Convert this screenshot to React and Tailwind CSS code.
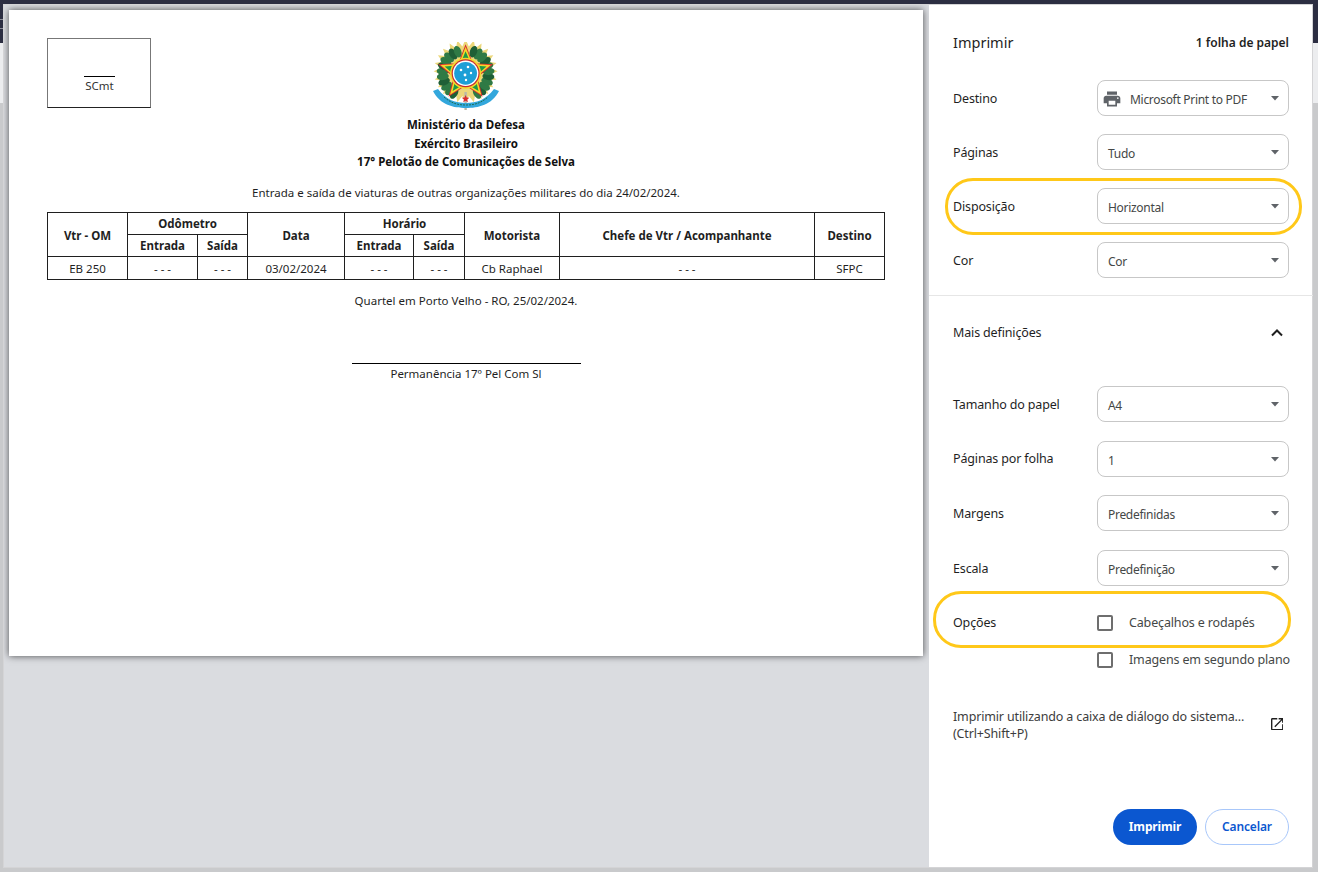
const star = (cx, cy, R, r, n = 5) => {
  const pts = [];
  for (let i = 0; i < n * 2; i++) {
    const a = -Math.PI / 2 + (i * Math.PI) / n;
    const d = i % 2 ? r : R;
    pts.push(`${(cx + d * Math.cos(a)).toFixed(2)},${(cy + d * Math.sin(a)).toFixed(2)}`);
  }
  return pts.join(" ");
};

function Emblem() {
  const cx = 33.6, cy = 31.3;
  const leaves = [];
  for (let i = 0; i < 11; i++) {
    const a = (Math.PI / 180) * (120 + i * 13);
    leaves.push([cx + 23 * Math.cos(a), cy + 23 * Math.sin(a), (a * 180) / Math.PI + 90]);
    leaves.push([cx - 23 * Math.cos(a), cy + 23 * Math.sin(a), -(a * 180) / Math.PI - 90]);
  }
  return (
    <svg width="68" height="68" viewBox="0 0 68 68" className="block blur-[0.3px]">
      <polygon points={star(cx, cy - 2, 32, 25, 24)} fill="#ecd77a" />
      {leaves.map(([x, y, r], i) => (
        <ellipse key={i} cx={x} cy={y} rx="3.6" ry="6" fill={i % 3 ? "#2f7a45" : "#1f5f36"} transform={`rotate(${r} ${x} ${y})`} />
      ))}
      <rect x="32.4" y="50" width="2.4" height="18" fill="#b9b9a8" />
      <polygon points={star(cx, cy, 29, 12.5)} fill="#d92c2c" />
      <polygon points={star(cx, cy, 26.5, 11.5)} fill="#f4d92b" />
      <polygon points={star(cx, cy, 22, 10)} fill="#1f9a45" />
      <circle cx={cx} cy={cy} r="15.5" fill="#f4d92b" />
      <circle cx={cx} cy={cy} r="14" fill="#c62e2e" />
      <circle cx={cx} cy={cy} r="12.8" fill="#ffffff" />
      <circle cx={cx} cy={cy} r="11.4" fill="#1c9fd6" />
      <circle cx="29" cy="28" r="1.3" fill="#fff" />
      <circle cx="36" cy="25" r="1.3" fill="#fff" />
      <circle cx="39" cy="31" r="1.2" fill="#fff" />
      <circle cx="33" cy="33" r="1.4" fill="#fff" />
      <circle cx="34" cy="38" r="1.2" fill="#fff" />
      <path d="M1 49 L6 47 C14 58 24 61 34 61 C44 61 54 58 62 47 L67 49 C60 63 46 66 34 66 C22 66 8 63 1 49 Z" fill="#33a7dc" />
      <path d="M12 55 C20 62 27 63 34 63 C41 63 48 62 56 55" fill="none" stroke="#1d6f52" strokeWidth="1" strokeDasharray="2 1" />
      <polygon points={star(33.6, 57, 4, 1.8)} fill="#d92c2c" />
    </svg>
  );
}

const Caret = () => (
  <svg width="8" height="5" viewBox="0 0 8 5" className="absolute right-[9px] top-[15px]">
    <path d="M0 0h8L4 4.6z" fill="#5f6368" />
  </svg>
);

function Select({ children, icon }) {
  return (
    <div className="relative flex h-[36px] w-[192px] shrink-0 items-center rounded-[8px] border border-[#c7c7c7] pl-[10px] pt-[4px] text-[12px] tracking-[-0.3px] text-[#444746]">
      {icon}
      <span>{children}</span>
      <Caret />
    </div>
  );
}

function Row({ label, children, icon }) {
  return (
    <div className="flex h-[36px] items-center">
      <div className="w-[144px] shrink-0 pt-[2px] text-[#1f1f1f]">{label}</div>
      <Select icon={icon}>{children}</Select>
    </div>
  );
}

function Check({ children }) {
  return (
    <div className="flex h-[20px] items-center">
      <span className="h-[16px] w-[16px] shrink-0 rounded-[2px] border-2 border-[#6e6e6e]" />
      <span className="ml-[16px] whitespace-nowrap text-[#444746]">{children}</span>
    </div>
  );
}

const Th = ({ children, ...p }) => (
  <th className="border border-[#1f1f1f] p-0 pt-[2px] text-center font-bold" {...p}>{children}</th>
);
const ThTall = ({ children }) => (
  <th rowSpan={2} className="border border-[#1f1f1f] p-0 pt-[4px] text-center font-bold">{children}</th>
);
const Td = ({ children }) => (
  <td className="border border-[#1f1f1f] p-0 pt-[3px] text-center">{children}</td>
);

export default function App() {
  return (
    <div className="relative h-[872px] w-[1318px] overflow-hidden bg-[#c9cacc] text-[12.5px] tracking-[-0.15px]" style={{ fontFamily: '"Noto Sans", "Open Sans", sans-serif' }}>
      <div className="h-[43px] bg-[#2c2e42] pt-[19px]">
        <div className="h-[1px] w-[3px] bg-[#8a8b96]" />
        <div className="mt-[8px] h-[1px] w-[3px] bg-[#8a8b96]" />
      </div>
      <div className="h-[60px] bg-[#ecedef]" />
      <div className="absolute bottom-[4px] left-[3px] right-[5px] top-[4px] flex border border-[#d4d4d6] bg-white">
        <div className="w-[925px] shrink-0 overflow-hidden bg-[#dadce0] pl-[5px] pt-[5px] tracking-normal">
          <div className="h-[646px] w-[914px] bg-white px-[38px] pt-[28px] text-[#1f1f1f] shadow-[0_0_7px_rgba(0,0,0,0.65)]">
            <div className="grid grid-cols-[104px_1fr_104px]">
              <div className="flex h-[70px] flex-col items-center border border-[#777] border-b-[#222] pl-[1px] pt-[37px] text-[11.5px] leading-[18px] text-[#333]">
                <span className="border-t border-black px-[1px]">SCmt</span>
              </div>
              <div className="flex flex-col items-center pt-[4px]">
                <Emblem />
              </div>
              <div />
            </div>
            <div className="mt-[6px] text-center text-[11.5px] font-bold leading-[18.5px] text-[#111]">
              <div>Ministério da Defesa</div>
              <div>Exército Brasileiro</div>
              <div>17° Pelotão de Comunicações de Selva</div>
            </div>
            <div className="mt-[12px] text-center text-[11.5px] leading-[18px]">
              Entrada e saída de viaturas de outras organizações militares do dia 24/02/2024.
            </div>
            <table className="mt-[10px] w-[837px] table-fixed border-collapse text-[11.5px] leading-[16px]">
              <colgroup>
                <col className="w-[80px]" />
                <col className="w-[70px]" />
                <col className="w-[50px]" />
                <col className="w-[97px]" />
                <col className="w-[69px]" />
                <col className="w-[51px]" />
                <col className="w-[95px]" />
                <col className="w-[255px]" />
                <col className="w-[70px]" />
              </colgroup>
              <thead>
                <tr className="h-[22px]">
                  <ThTall>Vtr - OM</ThTall>
                  <Th colSpan={2}>Odômetro</Th>
                  <ThTall>Data</ThTall>
                  <Th colSpan={2}>Horário</Th>
                  <ThTall>Motorista</ThTall>
                  <ThTall>Chefe de Vtr / Acompanhante</ThTall>
                  <ThTall>Destino</ThTall>
                </tr>
                <tr className="h-[22px]">
                  <Th>Entrada</Th>
                  <Th>Saída</Th>
                  <Th>Entrada</Th>
                  <Th>Saída</Th>
                </tr>
              </thead>
              <tbody>
                <tr className="h-[23px]">
                  <Td>EB 250</Td>
                  <Td>- - -</Td>
                  <Td>- - -</Td>
                  <Td>03/02/2024</Td>
                  <Td>- - -</Td>
                  <Td>- - -</Td>
                  <Td>Cb Raphael</Td>
                  <Td>- - -</Td>
                  <Td>SFPC</Td>
                </tr>
              </tbody>
            </table>
            <div className="mt-[12px] text-center text-[11.5px] leading-[18px]">Quartel em Porto Velho - RO, 25/02/2024.</div>
            <div className="mx-auto mt-[53px] w-[229px] border-t border-black text-center text-[11.5px] leading-[20px]">
              Permanência 17º Pel Com Sl
            </div>
          </div>
        </div>
        <div className="flex w-[384px] flex-col px-[24px] pt-[28px]">
          <div className="flex h-[20px] items-center justify-between">
            <span className="text-[14.5px] tracking-normal text-[#1f1f1f]">Imprimir</span>
            <span className="text-[12px] font-semibold tracking-normal text-[#1f1f1f]">1 folha de papel</span>
          </div>
          <div className="mt-[27px] flex flex-col gap-[18px]">
            <Row
              label="Destino"
              icon={
                <svg width="20" height="20" viewBox="0 0 24 24" className="-ml-[6px] -mt-[3px] mr-[8px]">
                  <path fill="#5f6368" d="M19 8H5c-1.66 0-3 1.34-3 3v6h4v4h12v-4h4v-6c0-1.66-1.34-3-3-3zm-3 11H8v-5h8v5zm3-7c-.55 0-1-.45-1-1s.45-1 1-1 1 .45 1 1-.45 1-1 1zm-1-9H6v4h12V3z" />
                </svg>
              }
            >
              Microsoft Print to PDF
            </Row>
            <Row label="Páginas">Tudo</Row>
            <Row label="Disposição">Horizontal</Row>
            <Row label="Cor">Cor</Row>
          </div>
          <div className="-mx-[24px] mt-[17px] border-t border-[#e6e6e6]" />
          <div className="flex h-[73px] items-center justify-between pr-[6px]">
            <span className="pt-[2px] text-[#1f1f1f]">Mais definições</span>
            <svg width="12" height="8" viewBox="0 0 12 8">
              <path d="M1 6.5 6 1.5l5 5" fill="none" stroke="#1f1f1f" strokeWidth="2" />
            </svg>
          </div>
          <div className="mt-[17px] flex flex-col gap-[18.67px]">
            <Row label="Tamanho do papel">A4</Row>
            <Row label="Páginas por folha">1</Row>
            <Row label="Margens">Predefinidas</Row>
            <Row label="Escala">Predefinição</Row>
          </div>
          <div className="mt-[27px] flex">
            <div className="w-[144px] shrink-0 leading-[20px] text-[#1f1f1f]">Opções</div>
            <div className="flex flex-col gap-[17px]">
              <Check>Cabeçalhos e rodapés</Check>
              <Check>Imagens em segundo plano</Check>
            </div>
          </div>
          <div className="mt-[38px] flex items-center justify-between pr-[6px]">
            <div className="leading-[17px] text-[#3c3c3c]">
              Imprimir utilizando a caixa de diálogo do sistema...
              <br />
              (Ctrl+Shift+P)
            </div>
            <svg width="12.5" height="12.5" viewBox="3 3 18 18" className="-mt-[2px]">
              <path fill="#1f1f1f" d="M19 19H5V5h7V3H5c-1.11 0-2 .9-2 2v14c0 1.1.89 2 2 2h14c1.1 0 2-.9 2-2v-7h-2v7zM14 3v2h3.59l-9.83 9.83 1.41 1.41L19 6.41V10h2V3h-7z" />
            </svg>
          </div>
          <div className="mt-[67px] flex justify-end gap-[8px]">
            <button className="h-[36px] w-[84px] rounded-full bg-[#0b57d0] text-[12px] font-bold text-white">Imprimir</button>
            <button className="h-[36px] w-[84px] rounded-full border border-[#a8c7fa] bg-white text-[12px] font-semibold text-[#0b57d0]">Cancelar</button>
          </div>
        </div>
      </div>
      <div className="pointer-events-none absolute left-[945px] top-[178px] h-[57px] w-[357px] rounded-[28px] border-[3px] border-[#ffc819]" />
      <div className="pointer-events-none absolute left-[933px] top-[591px] h-[57px] w-[358px] rounded-[28px] border-[3px] border-[#ffc819]" />
    </div>
  );
}
